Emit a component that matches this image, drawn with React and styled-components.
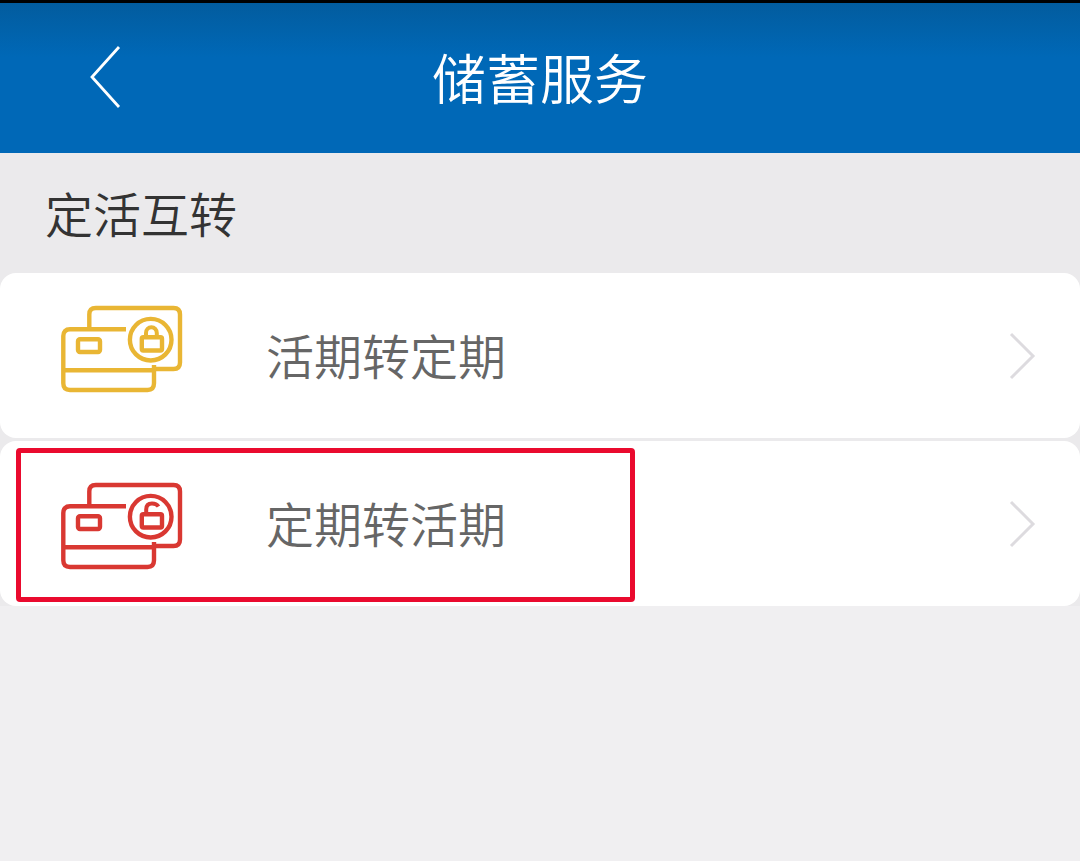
import styled, { createGlobalStyle } from "styled-components";

const GlobalStyle = createGlobalStyle`
  * {
    box-sizing: border-box;
  }

  body {
    margin: 0;
    background: #f0eff1;
    font-family: "Noto Sans CJK SC", sans-serif;
    font-weight: 350;
  }
`;

const SERVICES = [
  { id: "to-fixed", title: "活期转定期", color: "#e9b634", locked: true },
  { id: "to-current", title: "定期转活期", color: "#d93832", marked: true },
];

const Header = styled.header`
  display: grid;
  grid-template-columns: 120px 1fr 120px;
  align-items: center;
  height: 153px;
  padding: 0 45px 2px;
  border-top: 3px solid #000;
  background: linear-gradient(#025c9e, #0068b7 36%);
  color: #fff;
`;

const BackButton = styled.button`
  display: flex;
  justify-content: center;
  padding: 0;
  border: 0;
  background: none;
  color: inherit;
  cursor: pointer;
`;

const Title = styled.h1`
  margin: 0;
  font-size: 54px;
  line-height: 80px;
  font-weight: inherit;
  text-align: center;
`;

const SectionTitle = styled.h2`
  margin: 0;
  padding: 19px 45px 21px;
  background: #ebeaec;
  color: #333;
  font-size: 48px;
  line-height: 80px;
  font-weight: inherit;
`;

const List = styled.ul`
  display: flex;
  flex-direction: column;
  gap: 3px;
  margin: 0;
  padding: 0;
  list-style: none;
  background: #ebeaec;
`;

const Item = styled.li`
  position: relative;
`;

const Row = styled.a`
  display: flex;
  align-items: center;
  height: 165px;
  padding: 0 44px 0 60px;
  border-radius: 16px;
  background: #fff;
  color: #666;
  font-size: 48px;
  text-decoration: none;
`;

const RowTitle = styled.span`
  flex: 1;
  margin-left: 82px;
  padding-bottom: 4px;
`;

const Marker = styled.div`
  position: absolute;
  top: 7px;
  left: 16px;
  width: 619px;
  height: 154px;
  border: 5px solid #ea0a2e;
  border-radius: 4px;
  pointer-events: none;
`;

const CardsIcon = ({ color, locked }) => (
  <svg width="124" height="101" viewBox="0 0 124 101" fill="none" stroke={color} strokeWidth="4.4" aria-hidden="true">
    <g transform={locked ? undefined : "translate(0 9)"}>
      <path d="M29.3 23V9.5Q29.3 3 35.8 3H113.5Q120 3 120 9.5V57.5Q120 64 113.5 64H95" />
      <path d="M66 24.3H10Q3.3 24.3 3.3 31V78.3Q3.3 85 10 85H87.5Q94 85 94 78.3V60M3.3 65.3H94" />
      <rect x="18" y="34.3" width="22" height="12.7" rx="2" />
      <circle cx="90.7" cy="34.7" r="20.8" />
      <rect x="81.8" y="32.3" width="20.2" height="13.2" rx="1.5" />
      <path
        d={locked ? "M86 32v-4a5.4 5.7 0 0 1 10.8 0v4" : "M86.2 32v-4.500q0-6 5.800-6 4.500 0 6.500 3"}
        strokeWidth="4"
      />
    </g>
  </svg>
);

const Chevron = () => (
  <svg width="28" height="48" viewBox="0 0 28 48" fill="none" stroke="#dddbdf" strokeWidth="3" aria-hidden="true">
    <path d="M3 2l22 22L3 46" />
  </svg>
);

const App = () => {
  return (
    <>
      <GlobalStyle />
      <Header>
        <BackButton type="button" aria-label="返回">
          <svg width="32" height="64" viewBox="0 0 32 64" fill="none" stroke="currentColor" strokeWidth="2.8">
            <path d="M30 2L3 32l27 30" />
          </svg>
        </BackButton>
        <Title>储蓄服务</Title>
      </Header>
      <main>
        <SectionTitle>定活互转</SectionTitle>
        <List>
          {SERVICES.map((service) => (
            <Item key={service.id}>
              <Row href="#">
                <CardsIcon color={service.color} locked={service.locked} />
                <RowTitle>{service.title}</RowTitle>
                <Chevron />
              </Row>
              {service.marked && <Marker />}
            </Item>
          ))}
        </List>
      </main>
    </>
  );
};

export default App;
